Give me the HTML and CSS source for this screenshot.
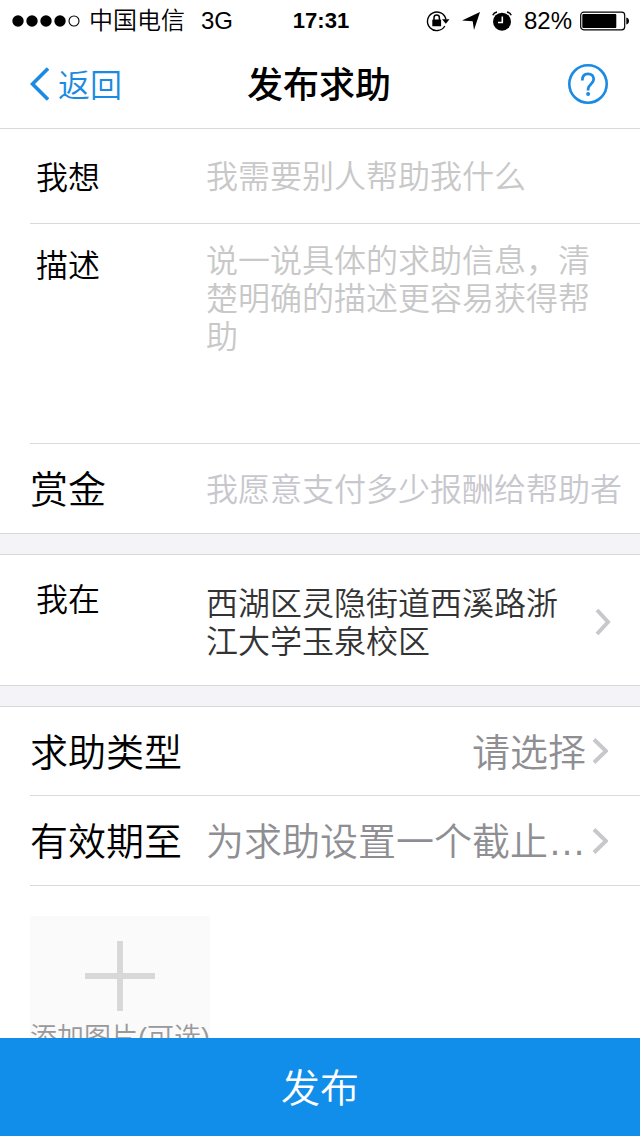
FILE: index.html
```html
<!DOCTYPE html>
<html lang="zh-CN">
<head>
<meta charset="utf-8">
<meta name="viewport" content="width=device-width, initial-scale=1">
<title>发布求助</title>
<link rel="stylesheet" href="styles.css">
</head>
<body>
<div class="app">
  <header class="top">
    <div class="status">
      <div class="status-side">
        <svg class="signal" width="68" height="12" viewBox="0 0 68 12" aria-hidden="true">
          <circle cx="6" cy="6" r="5.7"/><circle cx="20" cy="6" r="5.7"/><circle cx="34" cy="6" r="5.7"/><circle cx="48" cy="6" r="5.7"/>
          <circle cx="62" cy="6" r="5" fill="none" stroke="#000" stroke-width="1.1"/>
        </svg>
        <span>中国电信</span>
        <span class="network">3G</span>
      </div>
      <span class="clock">17:31</span>
      <div class="status-side status-right">
        <svg width="24" height="22" viewBox="0 0 24 22" aria-hidden="true">
          <path d="M18.800 16A9.300 9.300 0 1 1 19.900 9.500" fill="none" stroke="#000" stroke-width="1.400"/>
          <path d="M16 9.300H23.500L19.800 13.800z"/>
          <rect x="6.300" y="9.500" width="8.800" height="6.800" rx=".6"/>
          <path d="M8 10V7.700a2.700 2.700 0 0 1 5.400 0V10" fill="none" stroke="#000" stroke-width="1.500"/>
        </svg>
        <svg class="arrow" width="18" height="18" viewBox="0 0 18 18" aria-hidden="true"><path d="M18 0 12 18l-1.300-8.700L0 8.500z"/></svg>
        <svg class="alarm" width="20" height="20" viewBox="0 0 20 20" aria-hidden="true">
          <circle cx="10" cy="10.700" r="9"/>
          <path d="M.8 4.200Q1.800 1.600 5 .9M19.200 4.200Q18.200 1.600 15 .9" fill="none" stroke="#000" stroke-width="1.500"/>
          <path d="M10.300 5.500v6H6" fill="none" stroke="#fff" stroke-width="1.600"/>
        </svg>
        <span>82%</span>
        <svg class="battery" width="50" height="20" viewBox="0 0 50 20" aria-hidden="true">
          <rect x=".7" y="1.200" width="44" height="17.600" rx="3" fill="none" stroke="#000" stroke-width="1.200"/>
          <rect x="2.300" y="3" width="34" height="14" rx="1"/>
          <path d="M46.300 6.500q2.700.7 2.700 3.500t-2.700 3.500z"/>
        </svg>
      </div>
    </div>
    <nav class="nav">
      <a class="back" href="#">
        <svg width="20" height="34" viewBox="0 0 20 34" aria-hidden="true"><path d="M18 1.500 2.500 17 18 32.500" fill="none" stroke="currentColor" stroke-width="3.600"/></svg>
        <span class="back-text">返回</span>
      </a>
      <h1 class="title">发布求助</h1>
      <button class="help" type="button" aria-label="帮助">
        <svg width="40" height="40" viewBox="0 0 40 40" aria-hidden="true">
          <circle cx="20" cy="20" r="18.700" fill="none" stroke="currentColor" stroke-width="2.600"/>
          <path d="M14.300 16.500c0-4.500 2.200-6.700 5.700-6.700s5.700 2.200 5.700 5.500c0 4.900-5.600 4.900-5.600 9.700v1.500" fill="none" stroke="currentColor" stroke-width="2.800"/>
          <circle cx="20.100" cy="30" r="2" fill="currentColor"/>
        </svg>
      </button>
    </nav>
  </header>

  <form class="form" id="help-form">
    <section class="group">
      <div class="row row-want">
        <label class="label label-small" for="want">我想</label>
        <input class="field" id="want" type="text" placeholder="我需要别人帮助我什么">
      </div>
      <div class="row row-desc">
        <label class="label label-small" for="desc">描述</label>
        <textarea class="field field-area" id="desc" placeholder="说一说具体的求助信息，清楚明确的描述更容易获得帮助"></textarea>
      </div>
      <div class="row">
        <label class="label" for="reward">赏金</label>
        <input class="field field-reward" id="reward" type="text" placeholder="我愿意支付多少报酬给帮助者">
      </div>
    </section>

    <section class="group">
      <div class="row row-place">
        <span class="label label-small" id="place-label">我在</span>
        <button class="picker address" type="button" aria-labelledby="place-label place">
          <span class="address-text" id="place">西湖区灵隐街道西溪路浙江大学玉泉校区</span>
          <svg class="chevron" width="16" height="28" viewBox="0 0 16 28" aria-hidden="true"><path d="M2 2l11 12L2 26"/></svg>
        </button>
      </div>
    </section>

    <section class="group group-last">
      <div class="row">
        <span class="label" id="type-label">求助类型</span>
        <button class="picker" type="button" aria-labelledby="type-label type">
          <span class="picker-text" id="type">请选择</span>
          <svg class="chevron" width="16" height="28" viewBox="0 0 16 28" aria-hidden="true"><path d="M2 2.500l12 11.500L2 25.500"/></svg>
        </button>
      </div>
      <div class="row">
        <span class="label" id="until-label">有效期至</span>
        <button class="picker" type="button" aria-labelledby="until-label until">
          <span class="picker-text" id="until">为求助设置一个截止…</span>
          <svg class="chevron" width="16" height="28" viewBox="0 0 16 28" aria-hidden="true"><path d="M2 2.500l12 11.500L2 25.500"/></svg>
        </button>
      </div>
      <div class="photos">
        <button class="add-photo" type="button">
          <svg width="70" height="70" viewBox="0 0 70 70" aria-hidden="true"><path d="M35 0v70M0 35h70" stroke="#d8d8d8" stroke-width="6"/></svg>
          <span class="add-text">添加图片(可选)</span>
        </button>
      </div>
    </section>
  </form>

  <button class="submit" type="submit" form="help-form">发布</button>
</div>
</body>
</html>
```
FILE: styles.css
```css
* {
  box-sizing: border-box;
}

body {
  margin: 0;
  background: #fff;
  color: #000;
  font-family: "Liberation Sans", "Noto Sans CJK SC", sans-serif;
  font-weight: 350;
}

button,
input,
textarea {
  margin: 0;
  padding: 0;
  border: 0;
  border-radius: 0;
  background: none;
  color: inherit;
  font: inherit;
}

.app {
  display: flex;
  flex-direction: column;
  height: 100vh;
}

.top {
  flex: none;
  border-bottom: 1px solid #d9d9d9;
}

.status {
  display: grid;
  grid-template-columns: 1fr auto 1fr;
  align-items: center;
  height: 40px;
  padding: 0 10px 0 12px;
  font-size: 24px;
  line-height: 40px;
}

.status > *,
.status span {
  line-height: 42px;
}

.status-side {
  display: flex;
  align-items: center;
  white-space: nowrap;
}

.signal {
  margin-right: 9px;
}

.network {
  margin-left: 16px;
}

.clock {
  font-size: 22px;
  font-weight: 700;
}

.status-right {
  justify-content: flex-end;
}

.arrow {
  margin-left: 12px;
}

.alarm {
  margin: 0 12px;
}

.battery {
  margin-left: 8px;
}

.nav {
  display: grid;
  grid-template-columns: 1fr auto 1fr;
  align-items: center;
  height: 88px;
  padding: 0 32px 0 30px;
}

.back {
  display: flex;
  align-items: center;
  gap: 8px;
  color: #1a8ae2;
  font-size: 32px;
  line-height: 40px;
  text-decoration: none;
}

.back-text,
.title {
  padding-top: 4px;
}

.title {
  margin: 0;
  font-size: 36px;
  font-weight: 500;
  line-height: 40px;
}

.help {
  justify-self: end;
  height: 40px;
  color: #1a8ae2;
}

.form {
  flex: 1;
  min-height: 0;
  overflow: hidden;
  background: #f3f3f8;
}

.group {
  margin-bottom: 20px;
  padding-left: 30px;
  border-bottom: 1px solid #d9d9d9;
  background: #fff;
}

.group + .group {
  border-top: 1px solid #d9d9d9;
}

.group-last {
  margin-bottom: 0;
}

.row {
  display: grid;
  grid-template-columns: 176px 1fr;
  align-items: center;
  min-height: 88px;
}

.row + .row,
.photos {
  border-top: 1px solid #d9d9d9;
  min-height: 90px;
}

.label {
  padding-top: 3px;
  font-size: 38px;
  line-height: 48px;
}

.label-small {
  padding-left: 6px;
  font-size: 32px;
}

.field {
  width: 100%;
  height: 48px;
  padding-top: 3px;
  outline: none;
  font-size: 32px;
  line-height: 38px;
}

.field::placeholder {
  color: #c8c8c8;
  opacity: 1;
}

.field-reward::placeholder {
  color: #c7c7cd;
}

.row-want {
  min-height: 94px;
}

.row-desc {
  align-items: start;
  padding: 16px 40px 8px 0;
}

.row-desc .label {
  line-height: 46px;
}

.field-area {
  display: block;
  height: 195px;
  padding-top: 2px;
  resize: none;
}

.row-place {
  align-items: start;
  padding: 18px 0 24px;
}

.picker {
  display: flex;
  align-items: center;
  justify-content: flex-end;
  gap: 6px;
  min-width: 0;
  padding-right: 32px;
  color: #8e8e93;
  font-size: 38px;
  line-height: 48px;
}

.picker-text {
  overflow: hidden;
  padding-top: 3px;
  text-overflow: ellipsis;
  white-space: nowrap;
}

.address {
  justify-content: space-between;
  padding: 10px 29px 0 0;
  color: #333;
  font-size: 32px;
  line-height: 38px;
  text-align: left;
}

.address-text {
  max-width: 360px;
  padding-top: 2px;
}

.chevron {
  flex: none;
  fill: none;
  stroke: #c7c7cc;
  stroke-width: 4;
}

.photos {
  padding: 30px 0;
}

.add-photo {
  display: flex;
  flex-direction: column;
  align-items: center;
  width: 180px;
  height: 180px;
  padding-top: 25px;
  background: #fafafa;
  color: #999;
  font-size: 27px;
}

.add-text {
  margin-top: 8px;
  line-height: 38px;
  white-space: nowrap;
}

.submit {
  flex: none;
  height: 98px;
  padding-top: 3px;
  background: #118eea;
  color: #fff;
  font-size: 39px;
  line-height: 48px;
}
```
